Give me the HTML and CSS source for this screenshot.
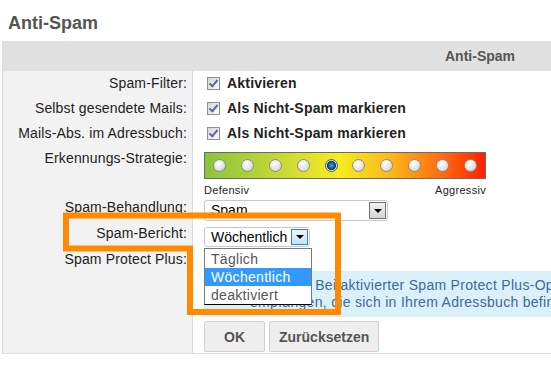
FILE: index.html
```html
<!DOCTYPE html>
<html lang="de">
<head>
  <meta charset="UTF-8" />
  <title>Anti-Spam</title>
  <link rel="stylesheet" href="styles.css">
</head>
<body>
  <h1 class="page-title">Anti-Spam</h1>

  <div class="panel">
    <div class="panel-head">Anti-Spam</div>

    <div class="row">
      <div class="label">Spam-Filter:</div>
      <div class="field"><span class="check on"></span><b>Aktivieren</b></div>
    </div>
    <div class="row">
      <div class="label">Selbst gesendete Mails:</div>
      <div class="field"><span class="check on"></span><b>Als Nicht-Spam markieren</b></div>
    </div>
    <div class="row">
      <div class="label">Mails-Abs. im Adressbuch:</div>
      <div class="field"><span class="check on"></span><b>Als Nicht-Spam markieren</b></div>
    </div>

    <div class="row row-strategy">
      <div class="label">Erkennungs-Strategie:</div>
      <div class="field">
        <div class="scale">
          <span class="radio"></span>
          <span class="radio"></span>
          <span class="radio"></span>
          <span class="radio"></span>
          <span class="radio on"></span>
          <span class="radio"></span>
          <span class="radio"></span>
          <span class="radio"></span>
          <span class="radio"></span>
          <span class="radio"></span>
        </div>
        <div class="scale-legend"><span>Defensiv</span><span>Aggressiv</span></div>
      </div>
    </div>

    <div class="row row-treat">
      <div class="label">Spam-Behandlung:</div>
      <div class="field">
        <div class="select wide">
          <span class="select-value">Spam</span>
          <span class="select-btn"><i class="caret"></i></span>
        </div>
      </div>
    </div>

    <div class="row row-report">
      <div class="label">Spam-Bericht:</div>
      <div class="field">
        <div class="select-wrap">
          <div class="select small">
            <span class="select-value">Wöchentlich</span>
            <span class="select-btn hover"><i class="caret"></i></span>
          </div>
          <ul class="options">
            <li>Täglich</li>
            <li class="picked">Wöchentlich</li>
            <li>deaktiviert</li>
          </ul>
        </div>
      </div>
    </div>

    <div class="row row-plus">
      <div class="label">Spam Protect Plus:</div>
      <div class="field">
        <div class="plain-line"><span class="check"></span>Aktivieren</div>
        <div class="info">
          <span class="info-icon">i</span>
          <p><strong>Hinweis:</strong> Bei aktivierter Spam Protect Plus-Option werden nur E-Mails von Absendern<br>empfangen, die sich in Ihrem Adressbuch befinden.</p>
        </div>
      </div>
    </div>

    <div class="row row-buttons">
      <div class="label"></div>
      <div class="field">
        <button class="btn btn-ok">OK</button>
        <button class="btn">Zurücksetzen</button>
      </div>
    </div>
  </div>

  <!-- Markierung um den Spam-Bericht -->
  <svg class="mark" width="551" height="369" viewBox="0 0 551 369">
    <polygon points="66,215.5 338,215.5 338,312 190,312 190,248.5 66,248.5"
             fill="none" stroke="#ff8a00" stroke-width="6" />
  </svg>
</body>
</html>
```

FILE: styles.css
```css
* {
  margin: 0;
  padding: 0;
  box-sizing: border-box;
}

html, body {
  overflow: hidden;
}

body {
  position: relative;
  width: 551px;
  height: 369px;
  background: #fff;
  font-family: 'Liberation Sans', Arial, sans-serif;
  font-size: 14px;
  color: #222;
}

.page-title {
  padding: 12px 0 0 8px;
  font-size: 18px;
  line-height: 22px;
  font-weight: bold;
  color: #555;
}

.panel {
  width: 955px;
  margin: 7px 0 0 2px;
  border-left: 1px solid #dcdcdc;
  border-bottom: 1px solid #dcdcdc;
}

.panel-head {
  height: 30px;
  line-height: 30px;
  background: #e1e1e1;
  text-align: center;
  font-weight: bold;
  color: #555;
}

.row {
  display: grid;
  grid-template-columns: 190px 1fr;
}

.label {
  background: #f2f2f2;
  border-right: 1px solid #dcdcdc;
  text-align: right;
  padding: 3px 5px 3px 0;
  line-height: 19px;
  letter-spacing: 0.15px;
}

.field {
  padding: 3px 0 3px 11px;
  line-height: 19px;
  display: flex;
  align-items: center;
}

.field b {
  letter-spacing: 0.2px;
}

/* checkbox */
.check {
  width: 13px;
  height: 13px;
  margin: 0 7px 0 3px;
  border: 1px solid #8e8f8f;
  background: linear-gradient(135deg, #d6d6d6, #fbfbfb);
  position: relative;
  flex-shrink: 0;
}

.check.on::after {
  content: '';
  position: absolute;
  left: 3px;
  top: 0px;
  width: 3px;
  height: 7px;
  border: solid #5a6d97;
  border-width: 0 2px 2px 0;
  transform: rotate(40deg);
}

/* strategie */
.row-strategy .field {
  display: block;
  padding-top: 6px;
  padding-bottom: 0;
}

.scale {
  width: 282px;
  height: 27px;
  border: 1px solid #6b6b6b;
  background: linear-gradient(to right, #8bc33d 0%, #c9da35 28%, #f7ec1f 48%, #fbb81a 66%, #ff6e12 84%, #ff2000 100%);
  display: flex;
  align-items: center;
  justify-content: space-between;
  padding: 0 8px;
}

.radio {
  width: 13px;
  height: 13px;
  border-radius: 50%;
  border: 1px solid #8d8d8d;
  background: radial-gradient(circle at 40% 35%, #ffffff 0%, #e6e6e6 50%, #c4c4c4 100%);
}

.radio.on {
  border-color: #3e5f78;
  background: radial-gradient(circle, #4fa3d6 0%, #0d5a8e 40%, #1b3f5c 55%, #d9d9d9 62%, #f3f3f3 100%);
}

.scale-legend {
  width: 282px;
  display: flex;
  justify-content: space-between;
  font-size: 11px;
  line-height: 13px;
  margin-top: 5px;
  letter-spacing: 0.3px;
}

/* selects */
.row-treat .label {
  padding-top: 1px;
}

.row-treat .field {
  padding-top: 3px;
  padding-bottom: 3px;
}

.row-report .label {
  padding-top: 0;
}

.row-report .field {
  padding-top: 3px;
  padding-bottom: 3px;
}

.select {
  display: flex;
  align-items: center;
  justify-content: space-between;
  background: #fff;
  border: 1px solid #c8c8c8;
  border-radius: 3px;
  padding-right: 1px;
}

.select.wide {
  width: 184px;
  height: 21px;
}

.select.small {
  width: 106px;
  height: 20px;
}

.select-value {
  padding-left: 6px;
  color: #000;
}

.select-btn {
  width: 17px;
  height: calc(100% - 2px);
  border: 1px solid #707070;
  background: linear-gradient(#f2f2f2, #d5d5d5);
  display: flex;
  align-items: center;
  justify-content: center;
}

.select-btn.hover {
  border-color: #3c7fb1;
  background: linear-gradient(#eaf6fd, #bee6fd);
}

.caret {
  width: 0;
  height: 0;
  border-left: 4px solid transparent;
  border-right: 4px solid transparent;
  border-top: 4px solid #000;
}

.select-wrap {
  position: relative;
}

.options {
  position: absolute;
  top: 21px;
  left: 0;
  width: 108px;
  list-style: none;
  background: #fff;
  border: 1px solid #7a7a7a;
  border-bottom-color: #000;
  padding-top: 1px;
  z-index: 2;
}

.options li {
  height: 18px;
  line-height: 18px;
  padding-left: 6px;
  color: #555;
  letter-spacing: 0.3px;
}

.options li.picked {
  background: #3399ff;
  color: #fff;
}

/* spam protect plus */
.row-plus .label {
  padding-top: 0;
}

.row-plus .field {
  display: block;
  padding-top: 0;
  padding-bottom: 3px;
}

.plain-line {
  height: 18px;
  display: flex;
  align-items: center;
}

.info {
  margin-top: 3px;
  height: 46px;
  background: #dbf1f9;
  display: flex;
  align-items: center;
  padding-left: 10px;
  color: #3d68a3;
}

.info-icon {
  width: 20px;
  height: 20px;
  border-radius: 50%;
  background: #2f9bd8;
  color: #fff;
  font-weight: bold;
  font-size: 13px;
  line-height: 20px;
  text-align: center;
  margin-right: 16px;
  flex-shrink: 0;
}

.info p {
  line-height: 17px;
  white-space: nowrap;
  letter-spacing: 0.3px;
}

.info strong {
  margin-right: 1px;
}

/* buttons */
.row-buttons .field {
  padding-top: 1px;
  padding-bottom: 1px;
  gap: 4px;
}

.btn {
  height: 31px;
  padding: 0 9px;
  font-family: inherit;
  font-size: 14px;
  font-weight: bold;
  color: #555;
  background: #eeeeee;
  border: 1px solid #cfcfcf;
  border-radius: 2px;
}

.btn-ok {
  width: 61px;
}

.mark {
  position: absolute;
  left: 0;
  top: 0;
  pointer-events: none;
  z-index: 5;
}
```
